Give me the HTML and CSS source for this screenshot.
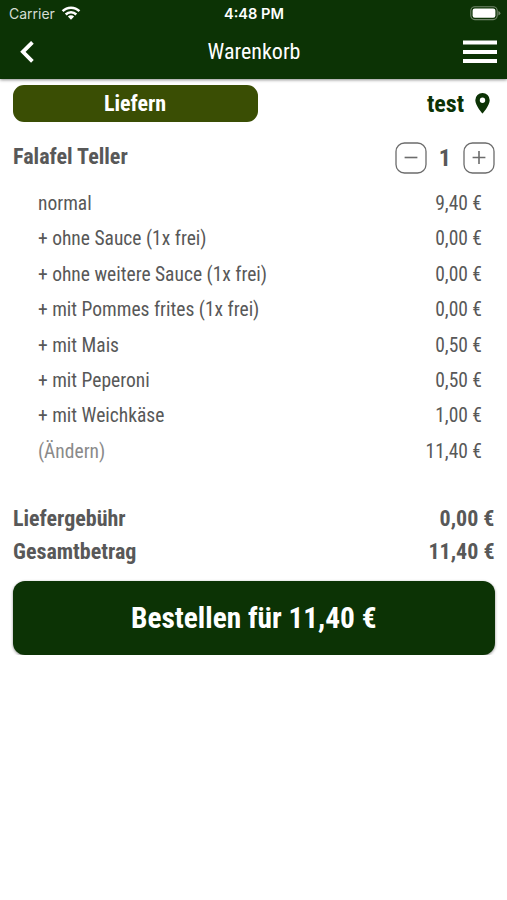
FILE: index.html
```html
<!DOCTYPE html>
<html lang="de">
<head>
<meta charset="utf-8">
<title>Warenkorb</title>
<link rel="stylesheet" href="styles.css">
</head>
<body>
<header class="top">
  <div class="status">
    <div class="carrier"><span>Carrier</span>
      <svg class="wifi" width="20" height="15" viewBox="0 0 20 15"><g fill="none" stroke="#fff" stroke-width="2.5"><path d="M1.6 5.1a11.9 11.9 0 0 1 16.8 0"/><path d="M4.7 8.5a7.5 7.5 0 0 1 10.6 0"/></g><path fill="#fff" d="M10 13.7 6.9 10.6a4.4 4.4 0 0 1 6.2 0z"/></svg>
    </div>
    <div class="clock">4:48 PM</div>
    <svg class="battery" width="31" height="15" viewBox="0 0 31 15"><rect x=".8" y=".8" width="26.4" height="12.8" rx="4" fill="none" stroke="#71866b" stroke-width="1.1"/><rect x="2.6" y="2.6" width="22.8" height="9.2" rx="2.2" fill="#fff"/><path fill="#71866b" d="M28.4 5q2 .7 2 2.2t-2 2.2z"/></svg>
  </div>
  <nav class="nav">
    <svg class="back" width="14" height="22" viewBox="0 0 14 22"><path d="M12.4 1.3 2.9 10.8l9.5 9.5" fill="none" stroke="#fff" stroke-width="3.8"/></svg>
    <h1 class="title">Warenkorb</h1>
    <svg class="menu" width="34" height="24" viewBox="0 0 34 24"><path fill="#fff" d="M0 .6h34v4H0zM0 9.9h34v4H0zM0 19h34v4H0z"/></svg>
  </nav>
</header>
<main class="cart">
  <div class="delivery">
    <div class="mode"><span>Liefern</span></div>
    <div class="place"><span>test</span>
      <svg width="15" height="21" viewBox="0 0 15 21"><path fill="#0c3305" fill-rule="evenodd" d="M7.5 0A7.2 7.2 0 0 0 .3 7.2C.3 12.6 7.5 20.5 7.5 20.5s7.2-7.9 7.2-13.3A7.2 7.2 0 0 0 7.5 0m0 4.5a2.7 2.7 0 1 1 0 5.4 2.7 2.7 0 0 1 0-5.4"/></svg>
    </div>
  </div>
  <div class="item">
    <h2 class="name">Falafel Teller</h2>
    <div class="stepper">
      <svg width="32" height="32" viewBox="0 0 32 32"><g fill="none" stroke="#6c6c6c" stroke-width="1.3"><rect x="1" y="1" width="30" height="30" rx="8.5"/><path stroke-width="1.6" d="M9.6 15.5h12.8"/></g></svg>
      <span class="count">1</span>
      <svg width="32" height="32" viewBox="0 0 32 32"><g fill="none" stroke="#6c6c6c" stroke-width="1.3"><rect x="1" y="1" width="30" height="30" rx="8.5"/><path stroke-width="1.6" d="M9.6 15.5h12.8M16 9.1v12.8"/></g></svg>
    </div>
  </div>
  <ul class="options">
    <li><span>normal</span><span>9,40 €</span></li>
    <li><span>+ ohne Sauce (1x frei)</span><span>0,00 €</span></li>
    <li><span>+ ohne weitere Sauce (1x frei)</span><span>0,00 €</span></li>
    <li><span>+ mit Pommes frites (1x frei)</span><span>0,00 €</span></li>
    <li><span>+ mit Mais</span><span>0,50 €</span></li>
    <li><span>+ mit Peperoni</span><span>0,50 €</span></li>
    <li><span>+ mit Weichkäse</span><span>1,00 €</span></li>
    <li><span class="change">(Ändern)</span><span>11,40 €</span></li>
  </ul>
  <div class="totals">
    <div class="total"><span>Liefergebühr</span><span>0,00 €</span></div>
    <div class="total"><span>Gesamtbetrag</span><span>11,40 €</span></div>
  </div>
  <button class="order"><span>Bestellen für 11,40 €</span></button>
</main>
</body>
</html>
```

FILE: styles.css
```css
* { box-sizing: border-box; margin: 0; padding: 0; }
body { background: #fff; color: #585858; font-family: "Roboto Condensed", Roboto, sans-serif; font-stretch: 75%; }
svg { display: block; flex: none; }
.top { height: 79px; background: #0c3305; color: #fff; box-shadow: 0 1px 3px rgba(0,0,0,.45); }
.status { height: 27px; display: grid; grid-template-columns: 1fr auto 1fr; align-items: center; padding: 0 6px 0 7px; font: 14px/27px Inter, sans-serif; }
.carrier { display: flex; align-items: center; gap: 6px; padding-left: 2px; color: #d5ddd3; }
.clock { font-weight: 600; font-size: 14.6px; line-height: 26px; padding-top: 1px; }
.battery { justify-self: end; }
.nav { height: 50px; display: grid; grid-template-columns: 1fr auto 1fr; align-items: center; padding: 0 10px 0 11px; }
.back { margin-left: 9px; }
.title { font-size: 22px; font-weight: 400; line-height: 50px; }
.menu { justify-self: end; }
.cart { padding: 6px 12.5px 0 13px; }
.delivery { display: flex; justify-content: space-between; height: 37px; }
.mode { width: 245px; padding-right: 1px; background: #3a4e04; border-radius: 11px; color: #fff; font-size: 22px; font-weight: 700; line-height: 37px; text-align: center; }
.place { display: flex; align-items: center; gap: 11px; padding-right: 4.5px; color: #0c3305; font-size: 24px; font-weight: 700; }
.item { display: flex; justify-content: space-between; height: 64px; padding-top: 20px; }
.name { font-size: 22.1px; line-height: 29px; }
.stepper { display: flex; height: 32px; align-items: center; gap: 12px; margin-right: -0.5px; font-size: 24px; font-weight: 700; line-height: 34px; }
.options { list-style: none; padding: 0 12.5px 0 25px; font-size: 19.5px; line-height: 35.4px; }
.options li, .total { display: flex; justify-content: space-between; }
.change { color: #8a8a8a; }
.totals { margin-top: 33px; font-size: 22px; font-weight: 700; line-height: 33px; }
.order { display: block; width: 100%; height: 73.5px; margin-top: 13px; border: 0; border-radius: 12px; background: #0c3305; color: #fff; font: inherit; font-size: 29.35px; font-weight: 700; box-shadow: 0 1px 3px rgba(0,0,0,.45); }
```
